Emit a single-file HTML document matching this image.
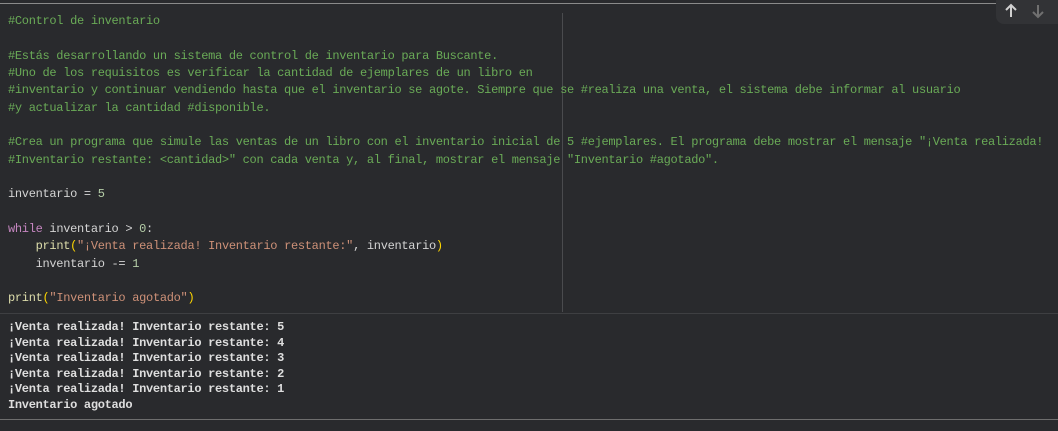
<!DOCTYPE html>
<html><head><meta charset="utf-8"><style>
body{margin:0;width:1058px;height:431px;background:#292a2d;overflow:hidden;position:relative;font-family:"Liberation Mono","DejaVu Sans Mono",monospace;}
.top{position:absolute;left:0;top:3px;width:1058px;height:1px;background:#8a8a8a}
.vl{position:absolute;left:562px;top:13px;width:1px;height:299px;background:#4a4b4e}
.sep{position:absolute;left:0;top:313px;width:1058px;height:1px;background:#3e3f42}
.bot{position:absolute;left:0;top:419px;width:1058px;height:1px;background:#6e6e6e}
.tb{position:absolute;left:996px;top:0;width:62px;height:24px;background:#323336;border-bottom-left-radius:8px}
.code{position:absolute;left:8px;top:13px;font-size:12px;letter-spacing:-0.3px;line-height:17.33px;white-space:pre;color:#d4d4d4}
.c{color:#6aab57}.k{color:#c586c0}.n{color:#b5cea8}.s{color:#ce9178}.f{color:#dcdcaa}.p{color:#ffd700}
.out{position:absolute;left:8px;top:320px;font-size:12px;letter-spacing:-0.3px;line-height:15.6px;white-space:pre;color:#dedede;font-weight:bold}
</style></head><body>
<div class="top"></div><div class="vl"></div><div class="sep"></div><div class="bot"></div>
<div class="tb"><svg width="62" height="24"><g stroke="#d0d0d0" stroke-width="2" fill="none"><path d="M15 17V5M10 10l5-5 5 5"/></g><g stroke="#707070" stroke-width="2" fill="none"><path d="M42 5v12M37 12l5 5 5-5"/></g></svg></div>
<div class="code"><span class="c">#Control de inventario

#Estás desarrollando un sistema de control de inventario para Buscante.
#Uno de los requisitos es verificar la cantidad de ejemplares de un libro en
#inventario y continuar vendiendo hasta que el inventario se agote. Siempre que se #realiza una venta, el sistema debe informar al usuario
#y actualizar la cantidad #disponible.

#Crea un programa que simule las ventas de un libro con el inventario inicial de 5 #ejemplares. El programa debe mostrar el mensaje "¡Venta realizada!
#Inventario restante: &lt;cantidad&gt;" con cada venta y, al final, mostrar el mensaje "Inventario #agotado".</span>

inventario = <span class="n">5</span>

<span class="k">while</span> inventario &gt; <span class="n">0</span>:
    <span class="f">print</span><span class="p">(</span><span class="s">"¡Venta realizada! Inventario restante:"</span>, inventario<span class="p">)</span>
    inventario -= <span class="n">1</span>

<span class="f">print</span><span class="p">(</span><span class="s">"Inventario agotado"</span><span class="p">)</span></div>
<div class="out">¡Venta realizada! Inventario restante: 5
¡Venta realizada! Inventario restante: 4
¡Venta realizada! Inventario restante: 3
¡Venta realizada! Inventario restante: 2
¡Venta realizada! Inventario restante: 1
Inventario agotado</div>
</body></html>
